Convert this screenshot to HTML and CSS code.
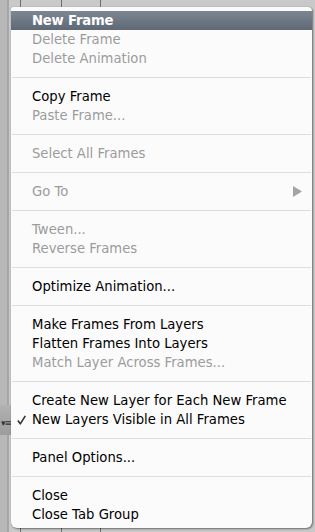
FILE: index.html
```html
<!DOCTYPE html>
<html>
<head>
<meta charset="utf-8">
<link rel="stylesheet" href="styles.css">
</head>
<body>
<div class="desk">
  <div class="panelbar"><span class="panelicon">▾≡</span></div>
  <div class="menu">
    <div class="group">
      <div class="item hl">New Frame</div>
      <div class="item off">Delete Frame</div>
      <div class="item off">Delete Animation</div>
    </div>
    <div class="sep"></div>
    <div class="group">
      <div class="item">Copy Frame</div>
      <div class="item off">Paste Frame...</div>
    </div>
    <div class="sep"></div>
    <div class="group">
      <div class="item off">Select All Frames</div>
    </div>
    <div class="sep"></div>
    <div class="group">
      <div class="item off sub">Go To<svg class="arrow" width="9" height="11" viewBox="0 0 9 11"><path d="M0 0 L9 5.5 L0 11 Z" fill="#a4a4a4"/></svg></div>
    </div>
    <div class="sep"></div>
    <div class="group">
      <div class="item off">Tween...</div>
      <div class="item off">Reverse Frames</div>
    </div>
    <div class="sep"></div>
    <div class="group">
      <div class="item">Optimize Animation...</div>
    </div>
    <div class="sep"></div>
    <div class="group">
      <div class="item">Make Frames From Layers</div>
      <div class="item">Flatten Frames Into Layers</div>
      <div class="item off">Match Layer Across Frames...</div>
    </div>
    <div class="sep"></div>
    <div class="group">
      <div class="item">Create New Layer for Each New Frame</div>
      <div class="item checked"><svg class="check" width="9" height="10" viewBox="0 0 9 10"><path d="M0.8 5.6 L3.3 8.8 L8.3 0.8" fill="none" stroke="#333" stroke-width="1.6" stroke-linejoin="round"/></svg>New Layers Visible in All Frames</div>
    </div>
    <div class="sep"></div>
    <div class="group">
      <div class="item">Panel Options...</div>
    </div>
    <div class="sep"></div>
    <div class="group">
      <div class="item">Close</div>
      <div class="item">Close Tab Group</div>
    </div>
  </div>
</div>
</body>
</html>
```
FILE: styles.css
```css
html, body {
  margin: 0;
  padding: 0;
}
body {
  width: 315px;
  height: 532px;
  overflow: hidden;
  font-family: "DejaVu Sans", sans-serif;
}
.desk {
  position: relative;
  width: 315px;
  height: 532px;
  background:
    linear-gradient(to right, transparent 20px, #6e6e6e 20px, #6e6e6e 21px, transparent 21px, transparent 61px, #6e6e6e 61px, #6e6e6e 62px, transparent 62px, transparent 100px, #6e6e6e 100px, #6e6e6e 101px, transparent 101px),
    linear-gradient(to right, #b8b8b8 0, #b8b8b8 7px, #a6a6a6 7px, #a6a6a6 9px, #c9c9c9 9px);
}
.panelbar {
  position: absolute;
  left: 0;
  top: 405px;
  width: 40px;
  height: 30px;
  background: linear-gradient(#b2b2b2, #9c9c9c);
}
.panelicon {
  position: absolute;
  left: 1px;
  top: 13px;
  font-size: 9px;
  line-height: 10px;
  color: #333;
  letter-spacing: -1px;
}
.menu {
  position: absolute;
  left: 11px;
  top: 7px;
  width: 301px;
  padding: 4px 0 4px;
  background: #fbfbfb;
  border-radius: 2px 4px 6px 6px;
  box-shadow: 1px 1px 2px rgba(0,0,0,0.45), 0 0 1px rgba(0,0,0,0.3);
}
.group {
  display: flex;
  flex-direction: column;
}
.item {
  position: relative;
  height: 19px;
  line-height: 19px;
  padding-left: 21px;
  font-size: 13.2px;
  color: #000;
  white-space: nowrap;
}
.item.off {
  color: #9b9b9b;
}
.item.hl {
  color: #fff;
  font-weight: bold;
  background: linear-gradient(#7d8794, #5f6875);
  letter-spacing: -0.2px;
}
.sep {
  height: 1px;
  margin: 9px 1px 9px;
  background: #dedede;
}
.arrow {
  position: absolute;
  right: 10px;
  top: 4px;
}
.check {
  position: absolute;
  left: 6px;
  top: 5px;
}
```
